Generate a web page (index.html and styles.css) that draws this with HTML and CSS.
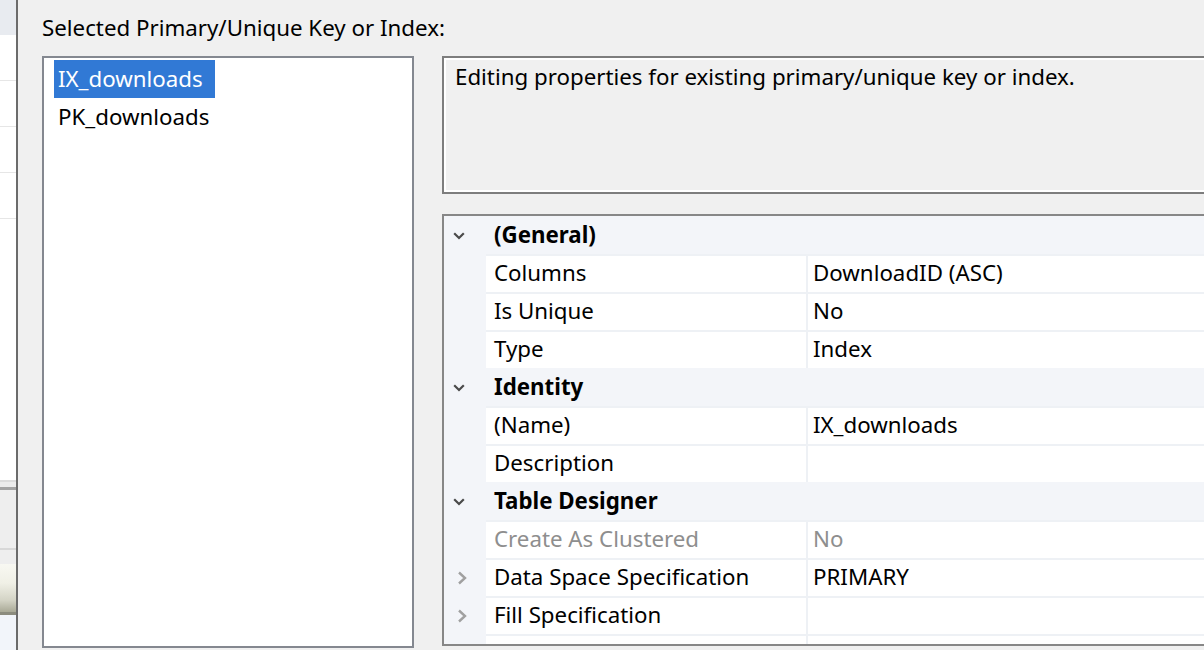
FILE: index.html
```html
<!DOCTYPE html>
<html lang="en">
<head>
<meta charset="utf-8">
<title>Indexes/Keys</title>
<link rel="stylesheet" href="styles.css">
</head>
<body>
<div class="window">
  <aside class="side">
    <div class="side-head"></div>
    <div class="side-row"></div>
    <div class="side-row"></div>
    <div class="side-row"></div>
    <div class="side-row"></div>
    <div class="side-fill"></div>
    <div class="side-sep-light"></div>
    <div class="side-sep-gap"></div>
    <div class="side-sep-dark"></div>
    <div class="side-gray"></div>
    <div class="side-line"></div>
    <div class="side-gray2"></div>
    <div class="side-btn"></div>
    <div class="side-btn-edge"></div>
    <div class="side-foot"></div>
  </aside>
  <main class="dialog">
    <div class="caption">Selected Primary/Unique Key or Index:</div>
    <div class="panes">
      <ul class="keylist">
        <li class="key selected"><span>IX_downloads</span></li>
        <li class="key"><span>PK_downloads</span></li>
      </ul>
      <div class="props">
        <div class="desc">Editing properties for existing primary/unique key or index.</div>
        <div class="grid">
          <div class="row cat">
            <div class="gutter"><svg class="chev-down" viewBox="0 0 12 8" width="12" height="8"><polyline points="1.2,1.2 6,6 10.8,1.2"/></svg></div>
            <div class="label">(General)</div>
          </div>
          <div class="row">
            <div class="gutter"></div>
            <div class="name">Columns</div>
            <div class="value">DownloadID (ASC)</div>
          </div>
          <div class="row">
            <div class="gutter"></div>
            <div class="name">Is Unique</div>
            <div class="value">No</div>
          </div>
          <div class="row">
            <div class="gutter"></div>
            <div class="name">Type</div>
            <div class="value">Index</div>
          </div>
          <div class="row cat">
            <div class="gutter"><svg class="chev-down" viewBox="0 0 12 8" width="12" height="8"><polyline points="1.2,1.2 6,6 10.8,1.2"/></svg></div>
            <div class="label">Identity</div>
          </div>
          <div class="row">
            <div class="gutter"></div>
            <div class="name">(Name)</div>
            <div class="value">IX_downloads</div>
          </div>
          <div class="row">
            <div class="gutter"></div>
            <div class="name">Description</div>
            <div class="value"></div>
          </div>
          <div class="row cat">
            <div class="gutter"><svg class="chev-down" viewBox="0 0 12 8" width="12" height="8"><polyline points="1.2,1.2 6,6 10.8,1.2"/></svg></div>
            <div class="label">Table Designer</div>
          </div>
          <div class="row">
            <div class="gutter"></div>
            <div class="name muted">Create As Clustered</div>
            <div class="value muted">No</div>
          </div>
          <div class="row">
            <div class="gutter"><svg class="chev-right" viewBox="0 0 10 14" width="10" height="14"><polyline points="2,1.5 8,7 2,12.5"/></svg></div>
            <div class="name">Data Space Specification</div>
            <div class="value">PRIMARY</div>
          </div>
          <div class="row">
            <div class="gutter"><svg class="chev-right" viewBox="0 0 10 14" width="10" height="14"><polyline points="2,1.5 8,7 2,12.5"/></svg></div>
            <div class="name">Fill Specification</div>
            <div class="value"></div>
          </div>
          <div class="row">
            <div class="gutter"></div>
            <div class="name"></div>
            <div class="value"></div>
          </div>
        </div>
      </div>
    </div>
  </main>
</div>
</body>
</html>
```
FILE: styles.css
```css
* { box-sizing: border-box; }

html, body {
  margin: 0;
  height: 100%;
}

body {
  font-family: "Noto Sans", "Open Sans", sans-serif;
  font-size: 22.3px;
  color: #000;
  background: #f0f0f0;
  overflow: hidden;
}

.window {
  display: flex;
  width: 1204px;
  height: 650px;
  overflow: hidden;
}

/* ---------- left strip (window behind) ---------- */
.side {
  width: 18px;
  flex: none;
  border-right: 2px solid #6b6b6b;
  display: flex;
  flex-direction: column;
  background: #fff;
}
.side-head { height: 35px; background: #e8ebf0; }
.side-row { height: 46px; border-bottom: 1px solid #e6e6e6; }
.side-fill { flex: 1; }
.side-sep-light { height: 2px; background: #dcdcdc; }
.side-sep-gap { height: 5px; background: #ececec; }
.side-sep-dark { height: 3px; background: #a4a4a4; }
.side-gray { height: 58px; background: #eeeeee; }
.side-line { height: 2px; background: #d8d8d8; }
.side-gray2 { height: 14px; background: #eeeeee; }
.side-btn {
  height: 48px;
  background: linear-gradient(#f8f8f2, #f0f0e6 40%, #d4d4c6 75%, #a9a996);
}
.side-btn-edge { height: 3px; background: #8c8c7e; }
.side-foot { height: 35px; background: #f2f5fa; }

/* ---------- dialog ---------- */
.dialog {
  flex: 1;
  min-width: 0;
  padding: 13px 0 0 24px;
  display: flex;
  flex-direction: column;
}

.caption {
  height: 30px;
  line-height: 30px;
  margin-bottom: 13px;
  white-space: nowrap;
}

.panes {
  display: flex;
  gap: 28px;
}

.keylist {
  width: 372px;
  height: 592px;
  flex: none;
  margin: 0;
  padding: 2px 0 0 10px;
  list-style: none;
  background: #fff;
  border: 2px solid #848890;
}

.key {
  height: 38px;
  line-height: 38px;
  white-space: nowrap;
}
.key span {
  display: inline-block;
  padding: 0 12px 0 4px;
}
.key.selected span {
  background: #3179d5;
  color: #fff;
}

.props {
  width: 780px;
  flex: none;
  display: flex;
  flex-direction: column;
}

.desc {
  height: 138px;
  margin-bottom: 20px;
  padding: 4px 0 0 11px;
  line-height: 30px;
  white-space: nowrap;
  border: 2px solid #7d7d7d;
  border-right: none;
  box-shadow: inset 2px 2px 0 #fff, inset 0 -2px 0 #fff;
}

/* ---------- property grid ---------- */
.grid {
  height: 432px;
  overflow: hidden;
  background: #f3f5f9;
  border: 2px solid #878787;
  border-right: none;
}

.row {
  display: flex;
  height: 38px;
  white-space: nowrap;
}

.gutter {
  width: 42px;
  flex: none;
  display: flex;
  align-items: center;
  padding-top: 1px;
}

.chev-down {
  margin-left: 9px;
  fill: none;
  stroke: #4a4a4a;
  stroke-width: 2.2;
}
.chev-right {
  margin-left: 13px;
  fill: none;
  stroke: #a0a0a0;
  stroke-width: 2.4;
}

.cat .label {
  font-weight: bold;
  padding: 2px 0 0 8px;
  line-height: 34px;
}

.name,
.value {
  background: #fff;
  border-top: 2px solid #eef1f5;
  line-height: 34px;
}

.name {
  width: 320px;
  flex: none;
  padding-left: 8px;
}

.value {
  flex: 1;
  padding-left: 5px;
  border-left: 2px solid #eef1f5;
}

.muted { color: #8e8e8e; }
```
